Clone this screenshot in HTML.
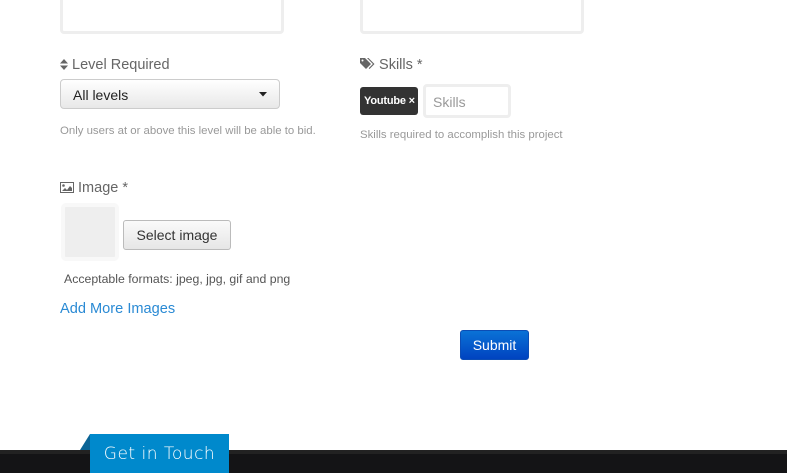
<!DOCTYPE html>
<html><head><meta charset="utf-8"><style>
*{box-sizing:border-box;margin:0;padding:0}
body{width:787px;height:473px;background:#fff;position:relative;overflow:hidden;font-family:"Liberation Sans",sans-serif}
.abs{position:absolute}
.inp{border:3px solid #eee;border-radius:4px;background:#fff}
.lbl{font-size:14.5px;color:#666}
.help{font-size:11.4px;color:#999}
</style></head><body>
<div class="abs inp" style="left:60px;top:-4px;width:224px;height:38px"></div>
<div class="abs inp" style="left:360px;top:-4px;width:224px;height:38px"></div>

<div class="abs lbl" style="left:60px;top:57px">
<svg width="8" height="11" viewBox="0 0 8 11" style="vertical-align:-1px"><path d="M4 0L8 4.5H0Z M4 11L8 6.5H0Z" fill="#666"/></svg> Level Required</div>
<div class="abs" style="left:60px;top:79px;width:220px;height:30px;border:1px solid #ccc;border-radius:4px;background:linear-gradient(#fff,#e8e8e8);font-size:14px;color:#222;padding:7px 0 0 12px">All levels
<svg class="abs" style="left:198px;top:12px" width="8" height="5"><path d="M0 0H8L4 4.5Z" fill="#222"/></svg></div>
<div class="abs help" style="left:60px;top:125px">Only users at or above this level will be able to bid.</div>

<div class="abs lbl" style="left:360px;top:57px">
<svg width="15" height="12" viewBox="0 0 15 12" style="vertical-align:-1px"><path d="M0 0H5L11 6 6 11 0 5Z" fill="#666"/><circle cx="2.5" cy="2.5" r="1" fill="#fff"/><path d="M7 0H8.5L14.5 6 9.5 11 8.7 10.2 12.9 6Z" fill="#666"/></svg> Skills *</div>
<div class="abs" style="left:360px;top:87px;width:58px;height:28px;background:#333;border-radius:3px;color:#fff;font-size:11px;font-weight:bold;padding:8px 0 0 4px;letter-spacing:-0.2px">Youtube ×</div>
<div class="abs inp" style="left:423px;top:84px;width:88px;height:34px;font-size:14px;color:#999;padding:7px 0 0 7px">Skills</div>
<div class="abs help" style="left:360px;top:129px">Skills required to accomplish this project</div>

<div class="abs lbl" style="left:60px;top:180px">
<svg width="14" height="11" viewBox="0 0 14 11" style="vertical-align:-1px"><rect x="0.5" y="0.5" width="13" height="10" fill="none" stroke="#666"/><circle cx="3.5" cy="3.5" r="1.3" fill="#666"/><path d="M2 9L5 6 7 8 10 4 12 6V9Z" fill="#666"/></svg> Image *</div>
<div class="abs" style="left:61px;top:203px;width:58px;height:58px;border:4px solid #f8f8f8;border-radius:5px;background:#eee"></div>
<div class="abs" style="left:123px;top:220px;width:108px;height:30px;border:1px solid #bbb;border-radius:3px;background:linear-gradient(#fafafa,#e6e6e6);font-size:14px;color:#333;text-align:center;line-height:28px">Select image</div>
<div class="abs" style="left:64px;top:272px;font-size:12.3px;color:#555">Acceptable formats: jpeg, jpg, gif and png</div>
<div class="abs" style="left:60px;top:301px;font-size:14.6px;color:#2a8ad4">Add More Images</div>

<div class="abs" style="left:460px;top:330px;width:69px;height:30px;border-radius:3px;background:linear-gradient(#0a72d6,#0043c0);border:1px solid #0b4db5;color:#fff;font-size:14px;text-align:center;line-height:28px">Submit</div>

<div class="abs" style="left:0;top:450px;width:787px;height:23px;background:#141416;border-top:4px solid #222"></div>
<svg class="abs" style="left:80px;top:434px" width="10" height="16"><path d="M10 0V16H0Z" fill="#0a6496"/></svg>
<div class="abs" style="left:90px;top:434px;width:139px;height:39px;background:#0089cc;color:#fff;font-family:'DejaVu Sans',sans-serif;font-weight:200;font-size:17px;text-align:center;padding-top:10px;letter-spacing:0.5px">Get in Touch</div>
</body></html>
